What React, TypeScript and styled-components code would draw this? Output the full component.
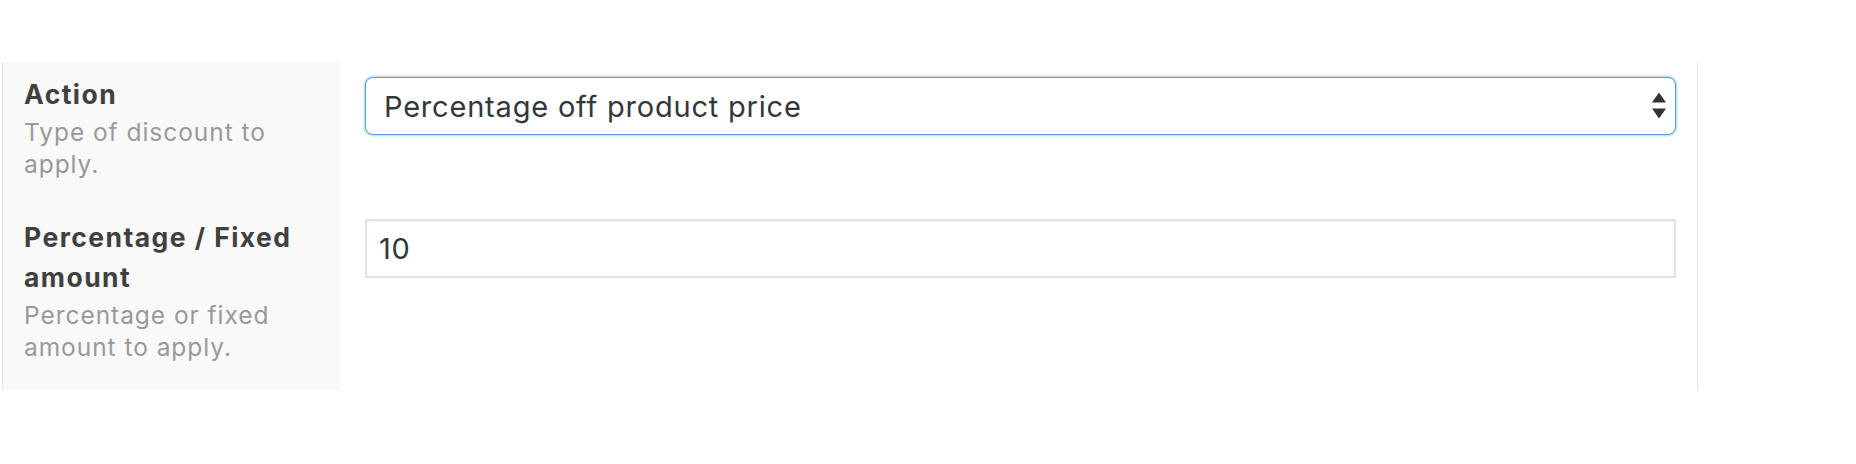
import React from "react";
import styled, { createGlobalStyle } from "styled-components";

const GlobalStyle = createGlobalStyle`
  html, body { margin: 0; padding: 0; background: #ffffff; }
  body { font-family: Inter, "Open Sans", "Liberation Sans", sans-serif; }
  * { box-sizing: border-box; }
`;

const Page = styled.div`
  padding: 62px 0 0 2px;
  width: 1856px;
  height: 464px;
`;

const Panel = styled.div`
  width: 1696px;
  border-left: 1px solid #e4e4e4;
  border-right: 1px solid #e4e4e4;
  display: grid;
  grid-template-columns: 337px 1fr;
`;

const LabelCell = styled.div<{ $padBottom: number }>`
  background: #f9f9f9;
  padding: 12px 10px ${(p) => p.$padBottom}px 21px;
`;

const FieldCell = styled.div<{ $padTop: number }>`
  padding: ${(p) => p.$padTop}px 21px 0 25px;
`;

const Label = styled.div`
  font-size: 26.5px;
  line-height: 40px;
  font-weight: 700;
  color: #404040;
  letter-spacing: 1.45px;
  white-space: nowrap;
`;

const Description = styled.div`
  margin-top: 2px;
  font-size: 24.5px;
  line-height: 32px;
  color: #999999;
  letter-spacing: 0.95px;
  white-space: nowrap;
`;

const SelectWrap = styled.div`
  position: relative;
  width: 100%;
`;

const Select = styled.select`
  appearance: none;
  -webkit-appearance: none;
  display: block;
  width: 100%;
  height: 58px;
  padding: 0 50px 0 18px;
  border: 1.5px solid #5b9dd9;
  border-radius: 8px;
  box-shadow: 0 0 3px rgba(30, 140, 190, 0.7);
  background: #ffffff;
  font-family: Inter, "Open Sans", "Liberation Sans", sans-serif;
  font-size: 29px;
  letter-spacing: 0.8px;
  color: #32373c;
  outline: none;
`;

const Arrows = styled.svg`
  position: absolute;
  right: 10px;
  top: 50%;
  transform: translateY(-50%);
  pointer-events: none;
`;

const TextInput = styled.input`
  display: block;
  width: 100%;
  height: 59px;
  padding: 0 12px;
  border: 2px solid #e2e2e2;
  border-radius: 0;
  box-shadow: inset 0 1px 2px rgba(0, 0, 0, 0.07);
  background: #ffffff;
  font-family: Inter, "Open Sans", "Liberation Sans", sans-serif;
  font-size: 29px;
  letter-spacing: 0.8px;
  color: #32373c;
  outline: none;
`;

export default function App() {
  return (
    <>
      <GlobalStyle />
      <Page>
        <Panel>
          <LabelCell $padBottom={25}>
            <Label>Action</Label>
            <Description>
              Type of discount to
              <br />
              apply.
            </Description>
          </LabelCell>
          <FieldCell $padTop={15}>
            <SelectWrap>
              <Select defaultValue="percent">
                <option value="percent">Percentage off product price</option>
              </Select>
              <Arrows width="14" height="27" viewBox="0 0 14 27">
                <polygon points="7,0 14,10 0,10" fill="#333" />
                <polygon points="0,16 14,16 7,26" fill="#333" />
              </Arrows>
            </SelectWrap>
          </FieldCell>
          <LabelCell $padBottom={27}>
            <Label>
              Percentage / Fixed
              <br />
              amount
            </Label>
            <Description>
              Percentage or fixed
              <br />
              amount to apply.
            </Description>
          </LabelCell>
          <FieldCell $padTop={14}>
            <TextInput defaultValue="10" />
          </FieldCell>
        </Panel>
      </Page>
    </>
  );
}
